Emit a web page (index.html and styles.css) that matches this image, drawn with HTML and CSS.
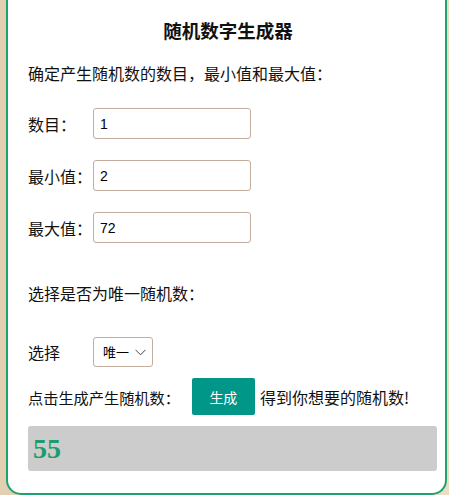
FILE: index.html
```html
<!DOCTYPE html>
<html lang="zh">
<head>
    <meta charset="UTF-8">
    <meta name="viewport" content="width=device-width, initial-scale=1.0">
    <title>随机数字生成器</title>
    <link rel="stylesheet" href="styles.css">
</head>
<body>
    <div class="kotak">
        <h2 class="judul">随机数字生成器</h2>
        <p class="keterangan">确定产生随机数的数目，最小值和最大值：</p>

        <div class="baris baris-awal">
            <label class="label">数目：</label>
            <input type="text" class="isian" value="1">
        </div>
        <div class="baris">
            <label class="label">最小值：</label>
            <input type="text" class="isian" value="2">
        </div>
        <div class="baris">
            <label class="label">最大值：</label>
            <input type="text" class="isian" value="72">
        </div>

        <p class="keterangan pilih-teks">选择是否为唯一随机数：</p>

        <div class="baris baris-pilih">
            <label class="label">选择</label>
            <div class="pilihan">
                <select>
                    <option>唯一</option>
                    <option>不唯一</option>
                </select>
                <svg class="panah" width="11" height="7" viewBox="0 0 11 7">
                    <path d="M0.5 0.8 L5.5 5.8 L10.5 0.8" fill="none" stroke="#444" stroke-width="1"/>
                </svg>
            </div>
        </div>

        <div class="baris-tombol">
            <span class="teks-kecil">点击生成产生随机数：</span>
            <button class="tombol">生成</button>
            <span>得到你想要的随机数!</span>
        </div>

        <div class="hasil">55</div>
    </div>
</body>
</html>
```

FILE: styles.css
```css
body {
    margin: 0;
    padding: 0;
    background: linear-gradient(90deg, #e3cfb2, #ecdcc4);
    font-family: "Microsoft YaHei", "Noto Sans CJK SC", sans-serif;
    font-size: 15.5px;
    color: #111;
    height: 495px;
    overflow: hidden;
}
.kotak {
    box-sizing: border-box;
    margin-left: 6px;
    width: 441px;
    background-color: white;
    border: 2px solid #1da36f;
    border-top: none;
    border-radius: 0 0 15px 15px;
    padding: 18px 8px 22px 20px;
}
.judul {
    margin: 0;
    font-size: 18.5px;
    line-height: 24px;
    font-weight: bold;
    text-align: center;
    padding-right: 9px;
}
.keterangan {
    margin: 19px 0 0 0;
    line-height: 24px;
    font-size: 16px;
}
.pilih-teks {
    margin-top: 38px;
}
.baris {
    display: flex;
    align-items: center;
    margin-top: 21px;
}
.baris-awal {
    margin-top: 23px;
}
.baris-pilih {
    margin-top: 32px;
}
.label {
    width: 65px;
    flex-shrink: 0;
    font-size: 16px;
}
.isian {
    width: 158px;
    height: 31px;
    box-sizing: border-box;
    border: 1px solid #c2ad9f;
    border-radius: 3px;
    padding: 0 6px;
    font-family: "Liberation Sans", Arial, sans-serif;
    font-size: 14px;
    color: #000;
}
.pilihan {
    position: relative;
    width: 60px;
    height: 30px;
}
.pilihan select {
    appearance: none;
    -webkit-appearance: none;
    width: 100%;
    height: 100%;
    box-sizing: border-box;
    border: 1px solid #c2ad9f;
    border-radius: 3px;
    background: white;
    padding: 0 0 2px 9px;
    font-family: "Microsoft YaHei", "Noto Sans CJK SC", sans-serif;
    font-size: 13px;
    color: #000;
}
.panah {
    position: absolute;
    left: 42px;
    top: 12px;
    pointer-events: none;
}
.baris-tombol {
    display: flex;
    align-items: center;
    margin-top: 11px;
    font-size: 16px;
}
.teks-kecil {
    font-size: 15.2px;
}
.tombol {
    margin: 0 5px 0 12px;
    width: 63px;
    height: 37px;
    background-color: #009688;
    color: white;
    border: none;
    border-radius: 2px;
    font-family: "Microsoft YaHei", "Noto Sans CJK SC", sans-serif;
    font-size: 14px;
    cursor: pointer;
}
.hasil {
    margin-top: 11px;
    height: 45px;
    background-color: #cccccc;
    border-radius: 3px;
    padding-left: 5px;
    display: flex;
    align-items: center;
    font-family: "Liberation Serif", "Times New Roman", serif;
    font-weight: bold;
    font-size: 28px;
    color: #1b9d6b;
}
```
